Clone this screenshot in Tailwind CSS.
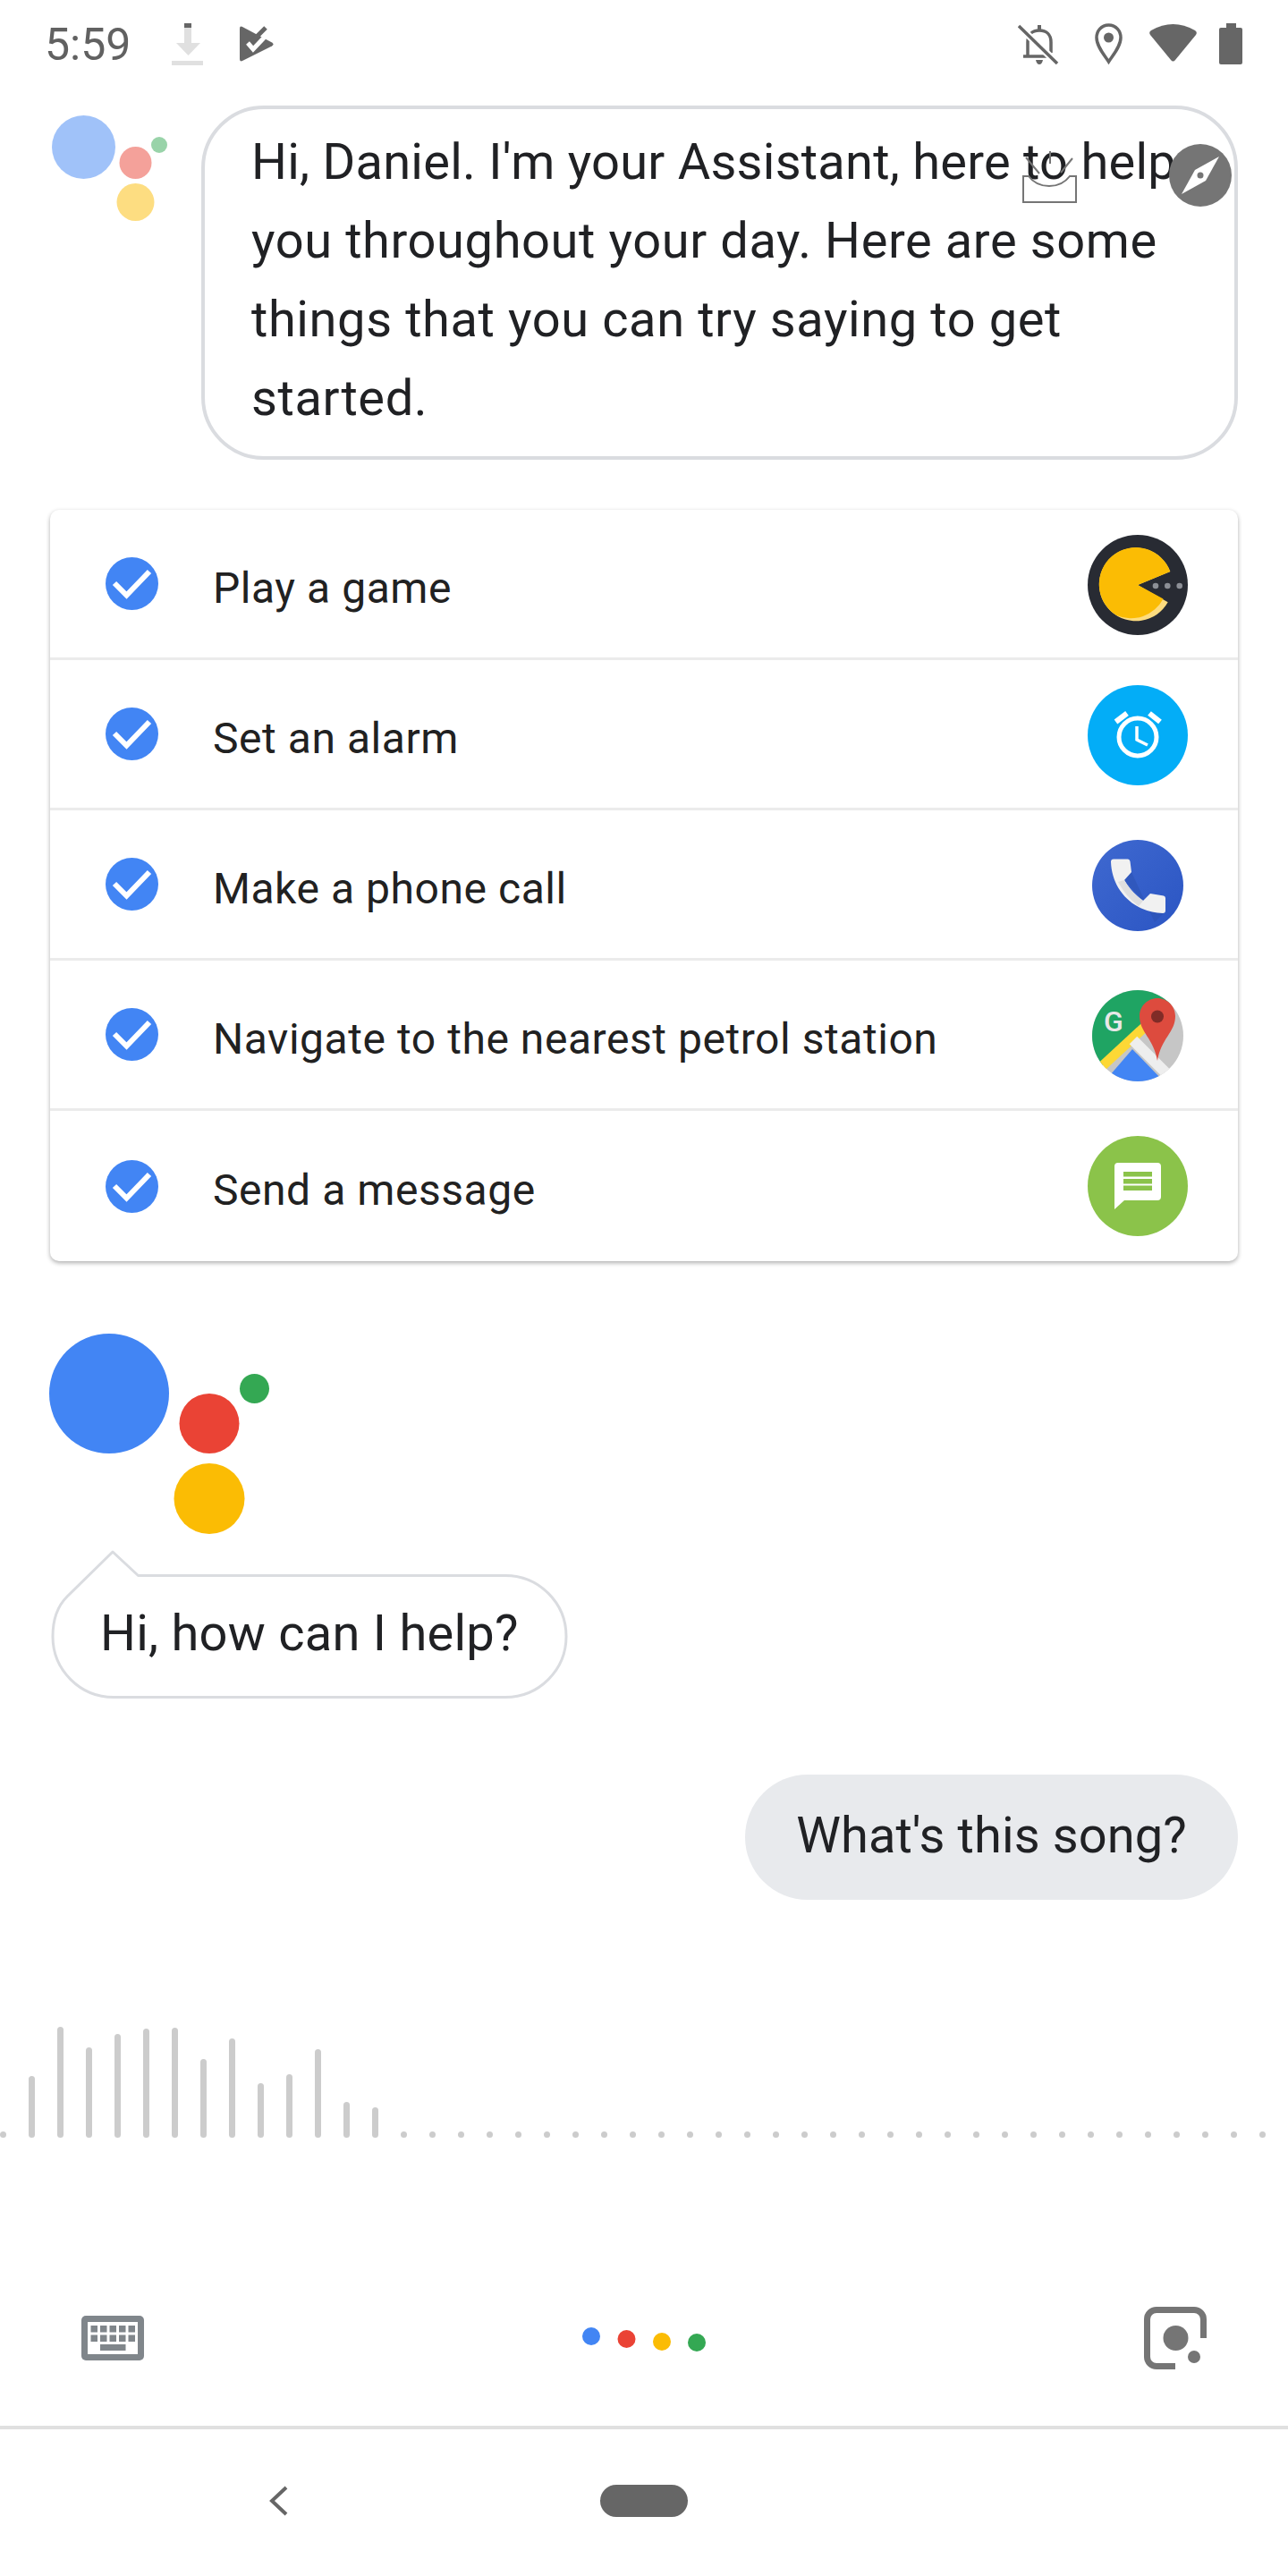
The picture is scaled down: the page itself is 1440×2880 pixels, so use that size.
<!DOCTYPE html>
<html lang="en">

<head>
    <meta charset="UTF-8" />
    <meta name="viewport" content="width=device-width, initial-scale=1" />
    <title>Assistant</title>
    <script src="https://cdn.jsdelivr.net/npm/@tailwindcss/browser@4"></script>
</head>

<body class="bg-white text-[#202124] font-[Roboto,sans-serif]">
    <div class="relative w-[1440px] h-[2880px] overflow-hidden flex flex-col">

        <!-- status bar -->
        <div class="h-[118px] pt-[26px] pl-[50px] pr-[51px] flex items-start">
            <span class="w-[94px] h-[48px] leading-[48px] text-[50px] text-[#616161] whitespace-nowrap">5:59</span>
            <svg class="ml-[48px]" width="35" height="48" viewBox="0 0 35 48">
                <rect x="14" y="0" width="8" height="5" fill="#666666" />
                <rect x="14" y="5" width="8" height="18" fill="#E0E0E0" />
                <path d="M5 22H32L18.500 36Z" fill="#E0E0E0" />
                <rect x="0" y="42" width="35" height="5" fill="#E0E0E0" />
            </svg>
            <svg class="ml-[41px]" width="38" height="48" viewBox="0 0 38 48">
                <path d="M3 4Q0 2.500 0 6V40Q0 43.500 3 42L36 25.500Q39 23.500 36 21.500Z" fill="#666666" />
                <path d="M14 20L29 5" stroke="#666666" stroke-width="5" />
                <path d="M9 22L15 29L33 10" stroke="#FFFFFF" stroke-width="5" fill="none" />
            </svg>
            <svg class="ml-auto" width="46" height="48" viewBox="0 0 46 48">
                <rect x="22" y="2" width="4" height="6" fill="#666666" />
                <path d="M11 36V21C11 13 16 8 24 8C32 8 37 13 37 21V33" stroke="#666666" stroke-width="3.500" fill="none" />
                <path d="M6 37H37" stroke="#666666" stroke-width="3.500" />
                <path d="M20 41H28Q27 46 24 46Q21 46 20 41Z" fill="#666666" />
                <path d="M1 3L44 45" stroke="#FFFFFF" stroke-width="8" />
                <path d="M1 3L44 45" stroke="#666666" stroke-width="3.500" />
            </svg>
            <svg class="ml-[40px]" width="31" height="48" viewBox="0 0 31 48">
                <path d="M15.500 2C7 2 2 9 2 16C2 26 11 36 15.500 43C20 36 29 26 29 16C29 9 24 2 15.500 2Z" stroke="#666666" stroke-width="3.500" fill="none" />
                <circle cx="15.500" cy="16" r="5.500" fill="#666666" />
            </svg>
            <svg class="ml-[30px]" width="53" height="48" viewBox="0 0 53 48">
                <path d="M2 8Q26.500 -6 51 8Q54 10 52 13L29 41Q26.500 44 24 41L1 13Q-1 10 2 8Z" fill="#666666" />
            </svg>
            <svg class="ml-[25px]" width="26" height="48" viewBox="0 0 26 48">
                <rect x="8" y="0" width="11" height="6" fill="#666666" />
                <rect x="0" y="5" width="26" height="41" rx="2" fill="#666666" />
            </svg>
        </div>

        <!-- welcome message -->
        <div class="flex items-start pl-[58px]">
            <svg class="mt-[11px]" width="130" height="118" viewBox="0 0 130 118" fill-opacity="0.5">
                <circle cx="35.500" cy="35.500" r="35.500" fill="#4285F4" />
                <circle cx="93.500" cy="53" r="18" fill="#EA4335" />
                <circle cx="120" cy="33" r="9" fill="#34A853" />
                <circle cx="93.500" cy="97" r="21" fill="#FBBC04" />
            </svg>
            <div class="ml-[37px] w-[1159px] h-[396px] border-[4px] border-[#DADCE0] rounded-[70px] pl-[52px] pt-[15px] text-[56px] leading-[88px] whitespace-nowrap tracking-[0.6px]">
                <span class="block tracking-[0.25px]">Hi, Daniel. I'm your Assistant, here to help</span>
                <span class="block">you throughout your day. Here are some</span>
                <span class="block">things that you can try saying to get</span>
                <span class="block">started.</span>
            </div>
        </div>

        <!-- suggestions -->
        <div class="mt-[56px] ml-[56px] w-[1328px] bg-white rounded-[10px] shadow-[0_2px_5px_rgba(0,0,0,0.32)] text-[48px] text-[#212121] tracking-[0.55px]">
            <div class="h-[168px] border-b-[3px] border-[#EBEBEB] pl-[62px] pr-[56px] flex items-center">
                <svg width="59" height="59" viewBox="0 0 59 59">
                    <circle cx="29.500" cy="29.500" r="29.500" fill="#4285F4" />
                    <path d="M10 29L23.500 42.500L49 16" stroke="#FFFFFF" stroke-width="6" fill="none" />
                </svg>
                <span class="ml-[61px] mt-[10px]">Play a game</span>
                <svg class="ml-auto mt-[3px]" width="112" height="112" viewBox="0 0 112 112">
                    <circle cx="56" cy="56" r="56" fill="#282B33" />
                    <path d="M56 56L92.300 41A41 41 0 1 0 89.700 75.300Z" fill="#FDDC7F" />
                    <path d="M56 56L92.300 41A41 41 0 1 0 32.300 90A41 41 0 0 0 84.500 71.500Z" fill="#FBBC04" />
                    <circle cx="76" cy="57" r="3.300" fill="#8C8F96" />
                    <circle cx="89.300" cy="57" r="3.300" fill="#8C8F96" />
                    <circle cx="102.700" cy="57" r="3.300" fill="#8C8F96" />
                </svg>
            </div>
            <div class="h-[168px] border-b-[3px] border-[#EBEBEB] pl-[62px] pr-[56px] flex items-center">
                <svg width="59" height="59" viewBox="0 0 59 59">
                    <circle cx="29.500" cy="29.500" r="29.500" fill="#4285F4" />
                    <path d="M10 29L23.500 42.500L49 16" stroke="#FFFFFF" stroke-width="6" fill="none" />
                </svg>
                <span class="ml-[61px] mt-[10px]">Set an alarm</span>
                <svg class="ml-auto mt-[3px]" width="112" height="112" viewBox="0 0 112 112">
                    <circle cx="56" cy="56" r="56" fill="#03ADF7" />
                    <circle cx="56" cy="58" r="21" stroke="#FFFFFF" stroke-width="5" fill="none" />
                    <path d="M55 46V61L67 67" stroke="#FFFFFF" stroke-width="3.500" fill="none" />
                    <path d="M31.500 41L44 31.500M69 31.500L81 41" stroke="#FFFFFF" stroke-width="6" fill="none" />
                </svg>
            </div>
            <div class="h-[168px] border-b-[3px] border-[#EBEBEB] pl-[62px] pr-[56px] flex items-center">
                <svg width="59" height="59" viewBox="0 0 59 59">
                    <circle cx="29.500" cy="29.500" r="29.500" fill="#4285F4" />
                    <path d="M10 29L23.500 42.500L49 16" stroke="#FFFFFF" stroke-width="6" fill="none" />
                </svg>
                <span class="ml-[61px] mt-[10px]">Make a phone call</span>
                <svg class="ml-auto mt-[3px]" width="112" height="112" viewBox="-5 -5 112 112">
                    <defs>
                        <linearGradient id="phoneBg" x1="0" y1="0" x2="1" y2="1">
                            <stop offset="0" stop-color="#3F69D0" />
                            <stop offset="1" stop-color="#2B55C3" />
                        </linearGradient>
                    </defs>
                    <circle cx="51" cy="51" r="51" fill="url(#phoneBg)" />
                    <path d="M44 36L36 45L57 68L65 60L82 80L70 92L44 36Z" fill="#2A4FAE" fill-opacity="0.45" />
                    <path d="M24 21.500H40Q42 21.500 42.500 24L44 36L36 45Q44 59 57 68L65 60L80 62.500Q82 63 82 65V79Q82 82 79 82C46 81 22 56 21 24.500Q21 21.500 24 21.500Z" fill="#F1F1F1" />
                    <path d="M29 47Q35 45 36 45Q44 59 57 68Q55 71 52 74Q38 64 29 47Z" fill="#DFDFDF" />
                </svg>
            </div>
            <div class="h-[168px] border-b-[3px] border-[#EBEBEB] pl-[62px] pr-[56px] flex items-center">
                <svg width="59" height="59" viewBox="0 0 59 59">
                    <circle cx="29.500" cy="29.500" r="29.500" fill="#4285F4" />
                    <path d="M10 29L23.500 42.500L49 16" stroke="#FFFFFF" stroke-width="6" fill="none" />
                </svg>
                <span class="ml-[61px] mt-[10px]">Navigate to the nearest petrol station</span>
                <svg class="ml-auto mt-[3px]" width="112" height="112" viewBox="-5 -5 112 112">
                    <defs>
                        <clipPath id="mapsClip">
                            <circle cx="51" cy="51" r="51" />
                        </clipPath>
                    </defs>
                    <g clip-path="url(#mapsClip)">
                        <rect width="102" height="102" fill="#C6C6C6" />
                        <path d="M0 0H92V12L60 40L6 90H0Z" fill="#1FA463" />
                        <path d="M8 88L60 40" stroke="#FDD835" stroke-width="11" />
                        <path d="M46 56L86 96" stroke="#EEEEEE" stroke-width="12" />
                        <path d="M14 102L45 66L80 102Z" fill="#4285F4" />
                    </g>
                    <path d="M73 9C62 9 53 18 53 29C53 47 69 54 73 79C77 54 93 47 93 29C93 18 84 9 73 9Z" fill="#DD4B3E" />
                    <circle cx="73" cy="29.500" r="7" fill="#802C27" />
                    <text x="13" y="46" font-family="Roboto, sans-serif" font-size="32" font-weight="500" letter-spacing="0" fill="#E8E8E8">G</text>
                </svg>
            </div>
            <div class="h-[168px] pl-[62px] pr-[56px] flex items-center">
                <svg width="59" height="59" viewBox="0 0 59 59">
                    <circle cx="29.500" cy="29.500" r="29.500" fill="#4285F4" />
                    <path d="M10 29L23.500 42.500L49 16" stroke="#FFFFFF" stroke-width="6" fill="none" />
                </svg>
                <span class="ml-[61px] mt-[10px]">Send a message</span>
                <svg class="ml-auto" width="112" height="112" viewBox="0 0 112 112">
                    <circle cx="56" cy="56" r="56" fill="#8BC34A" />
                    <path d="M34 30H78Q82 30 82 34V68Q82 72 78 72H41L30 82V34Q30 30 34 30Z" fill="#FFFFFF" />
                    <rect x="40" y="40" width="32" height="5.500" fill="#8BC34A" />
                    <rect x="40" y="48" width="32" height="5.500" fill="#8BC34A" />
                    <rect x="40" y="55.500" width="32" height="5.500" fill="#8BC34A" />
                </svg>
            </div>
        </div>

        <!-- assistant logo -->
        <svg class="mt-[81px] ml-[55px] shrink-0" width="250" height="224" viewBox="0 0 250 224">
            <circle cx="67" cy="67" r="67" fill="#4285F4" />
            <circle cx="179" cy="100.500" r="33.500" fill="#EA4335" />
            <circle cx="229.500" cy="61.500" r="16.500" fill="#34A853" />
            <circle cx="179" cy="184.500" r="39.500" fill="#FBBC04" />
        </svg>

        <!-- assistant bubble -->
        <div class="relative mt-[18px] ml-[57px] w-[578px] h-[166px] shrink-0 pt-[49px] pl-[55px] text-[56px] leading-[88px] whitespace-nowrap tracking-[0.25px]">
            <svg class="absolute top-0 left-0" width="578" height="166" viewBox="0 0 578 166">
                <path d="M69 2L97.500 28.500H508A68 68 0 0 1 508 164.500H70A68 68 0 0 1 2 96.500C2 78 8 62 18 52Z" fill="#FFFFFF" stroke="#DADCE0" stroke-width="3" stroke-linejoin="round" />
            </svg>
            <span class="relative">Hi, how can I help?</span>
        </div>

        <!-- user bubble -->
        <div class="mt-[85px] ml-[833px] w-[551px] h-[140px] pb-[4px] shrink-0 rounded-full bg-[#E8EAED] flex items-center justify-center text-[56px] whitespace-nowrap tracking-[0.1px]">
            What's this song?
        </div>

        <!-- voice level -->
        <div class="mt-[142px] h-[124px] shrink-0 flex items-end gap-[25px]">
            <div class="w-[7px] h-[7px] shrink-0 rounded-full bg-[#CCCCCC]"></div>
            <div class="w-[7px] h-[69px] shrink-0 rounded-full bg-[#CCCCCC]"></div>
            <div class="w-[7px] h-[124px] shrink-0 rounded-full bg-[#CCCCCC]"></div>
            <div class="w-[7px] h-[101px] shrink-0 rounded-full bg-[#CCCCCC]"></div>
            <div class="w-[7px] h-[116px] shrink-0 rounded-full bg-[#CCCCCC]"></div>
            <div class="w-[7px] h-[122px] shrink-0 rounded-full bg-[#CCCCCC]"></div>
            <div class="w-[7px] h-[123px] shrink-0 rounded-full bg-[#CCCCCC]"></div>
            <div class="w-[7px] h-[88px] shrink-0 rounded-full bg-[#CCCCCC]"></div>
            <div class="w-[7px] h-[111px] shrink-0 rounded-full bg-[#CCCCCC]"></div>
            <div class="w-[7px] h-[61px] shrink-0 rounded-full bg-[#CCCCCC]"></div>
            <div class="w-[7px] h-[71px] shrink-0 rounded-full bg-[#CCCCCC]"></div>
            <div class="w-[7px] h-[99px] shrink-0 rounded-full bg-[#CCCCCC]"></div>
            <div class="w-[7px] h-[40px] shrink-0 rounded-full bg-[#CCCCCC]"></div>
            <div class="w-[7px] h-[34px] shrink-0 rounded-full bg-[#CCCCCC]"></div>
            <div class="w-[7px] h-[7px] shrink-0 rounded-full bg-[#CCCCCC]"></div>
            <div class="w-[7px] h-[7px] shrink-0 rounded-full bg-[#CCCCCC]"></div>
            <div class="w-[7px] h-[7px] shrink-0 rounded-full bg-[#CCCCCC]"></div>
            <div class="w-[7px] h-[7px] shrink-0 rounded-full bg-[#CCCCCC]"></div>
            <div class="w-[7px] h-[7px] shrink-0 rounded-full bg-[#CCCCCC]"></div>
            <div class="w-[7px] h-[7px] shrink-0 rounded-full bg-[#CCCCCC]"></div>
            <div class="w-[7px] h-[7px] shrink-0 rounded-full bg-[#CCCCCC]"></div>
            <div class="w-[7px] h-[7px] shrink-0 rounded-full bg-[#CCCCCC]"></div>
            <div class="w-[7px] h-[7px] shrink-0 rounded-full bg-[#CCCCCC]"></div>
            <div class="w-[7px] h-[7px] shrink-0 rounded-full bg-[#CCCCCC]"></div>
            <div class="w-[7px] h-[7px] shrink-0 rounded-full bg-[#CCCCCC]"></div>
            <div class="w-[7px] h-[7px] shrink-0 rounded-full bg-[#CCCCCC]"></div>
            <div class="w-[7px] h-[7px] shrink-0 rounded-full bg-[#CCCCCC]"></div>
            <div class="w-[7px] h-[7px] shrink-0 rounded-full bg-[#CCCCCC]"></div>
            <div class="w-[7px] h-[7px] shrink-0 rounded-full bg-[#CCCCCC]"></div>
            <div class="w-[7px] h-[7px] shrink-0 rounded-full bg-[#CCCCCC]"></div>
            <div class="w-[7px] h-[7px] shrink-0 rounded-full bg-[#CCCCCC]"></div>
            <div class="w-[7px] h-[7px] shrink-0 rounded-full bg-[#CCCCCC]"></div>
            <div class="w-[7px] h-[7px] shrink-0 rounded-full bg-[#CCCCCC]"></div>
            <div class="w-[7px] h-[7px] shrink-0 rounded-full bg-[#CCCCCC]"></div>
            <div class="w-[7px] h-[7px] shrink-0 rounded-full bg-[#CCCCCC]"></div>
            <div class="w-[7px] h-[7px] shrink-0 rounded-full bg-[#CCCCCC]"></div>
            <div class="w-[7px] h-[7px] shrink-0 rounded-full bg-[#CCCCCC]"></div>
            <div class="w-[7px] h-[7px] shrink-0 rounded-full bg-[#CCCCCC]"></div>
            <div class="w-[7px] h-[7px] shrink-0 rounded-full bg-[#CCCCCC]"></div>
            <div class="w-[7px] h-[7px] shrink-0 rounded-full bg-[#CCCCCC]"></div>
            <div class="w-[7px] h-[7px] shrink-0 rounded-full bg-[#CCCCCC]"></div>
            <div class="w-[7px] h-[7px] shrink-0 rounded-full bg-[#CCCCCC]"></div>
            <div class="w-[7px] h-[7px] shrink-0 rounded-full bg-[#CCCCCC]"></div>
            <div class="w-[7px] h-[7px] shrink-0 rounded-full bg-[#CCCCCC]"></div>
            <div class="w-[7px] h-[7px] shrink-0 rounded-full bg-[#CCCCCC]"></div>
        </div>

        <!-- bottom actions -->
        <div class="mt-[189px] h-[70px] shrink-0 pl-[91px] flex items-center">
            <svg width="70" height="50" viewBox="0 0 70 50">
                <rect width="70" height="50" rx="5" fill="#80868B" />
                <rect x="7" y="7" width="56" height="36" fill="#FFFFFF" />
                <g fill="#80868B">
                    <rect x="10.500" y="11" width="7.500" height="7.500" />
                    <rect x="21" y="11" width="7.500" height="7.500" />
                    <rect x="31.500" y="11" width="7.500" height="7.500" />
                    <rect x="42" y="11" width="7.500" height="7.500" />
                    <rect x="52.500" y="11" width="7.500" height="7.500" />
                    <rect x="10.500" y="21.500" width="7.500" height="7.500" />
                    <rect x="21" y="21.500" width="7.500" height="7.500" />
                    <rect x="31.500" y="21.500" width="7.500" height="7.500" />
                    <rect x="42" y="21.500" width="7.500" height="7.500" />
                    <rect x="52.500" y="21.500" width="7.500" height="7.500" />
                    <rect x="21" y="32" width="28.500" height="7" />
                </g>
            </svg>
            <svg class="ml-[490px] self-start mt-[23px]" width="138" height="27" viewBox="0 0 138 27">
                <circle cx="10" cy="10" r="10" fill="#4285F4" />
                <circle cx="49.500" cy="13" r="10" fill="#EA4335" />
                <circle cx="89" cy="16" r="10" fill="#FBBC04" />
                <circle cx="128" cy="17" r="10" fill="#34A853" />
            </svg>
            <svg class="ml-[490px]" width="70" height="70" viewBox="0 0 70 70">
                <path d="M66.500 35V14A10.500 10.500 0 0 0 56 3.500H14A10.500 10.500 0 0 0 3.500 14V56A10.500 10.500 0 0 0 14 66.500H35" stroke="#757575" stroke-width="7" fill="none" />
                <circle cx="35.500" cy="35" r="14" fill="#757575" />
                <circle cx="56" cy="56" r="7" fill="#757575" />
            </svg>
        </div>

        <div class="mt-[63px] h-[4px] shrink-0 bg-[#E0E0E0]"></div>

        <!-- nav bar -->
        <div class="mt-[62px] shrink-0 pl-[301px] flex items-center">
            <svg width="21" height="36" viewBox="0 0 21 36">
                <path d="M19 3L3 18L19 33" stroke="#666666" stroke-width="4" fill="none" />
            </svg>
            <div class="ml-[349px] w-[98px] h-[36px] rounded-full bg-[#666666]"></div>
        </div>

        <!-- overlay icons from the screenshot tool -->
        <svg class="absolute left-[1142px] top-[167px]" width="62" height="60" viewBox="0 0 62 60">
            <path d="M2 30H8C14 38 22 41 31 41C40 41 48 38 54 30H61V59H2Z" stroke="#757575" stroke-width="2" fill="none" />
            <path d="M5 9L20 27M57 10L44 26M32 2V16" stroke="#757575" stroke-width="2" fill="none" />
        </svg>
        <svg class="absolute left-[1307px] top-[161px]" width="70" height="70" viewBox="0 0 70 70">
            <circle cx="35" cy="35" r="35" fill="#757575" />
            <path d="M56 14L41 41L14 56L29 29Z" fill="#FFFFFF" />
            <circle cx="35" cy="35" r="3.500" fill="#757575" />
        </svg>
    </div>
</body>

</html>
